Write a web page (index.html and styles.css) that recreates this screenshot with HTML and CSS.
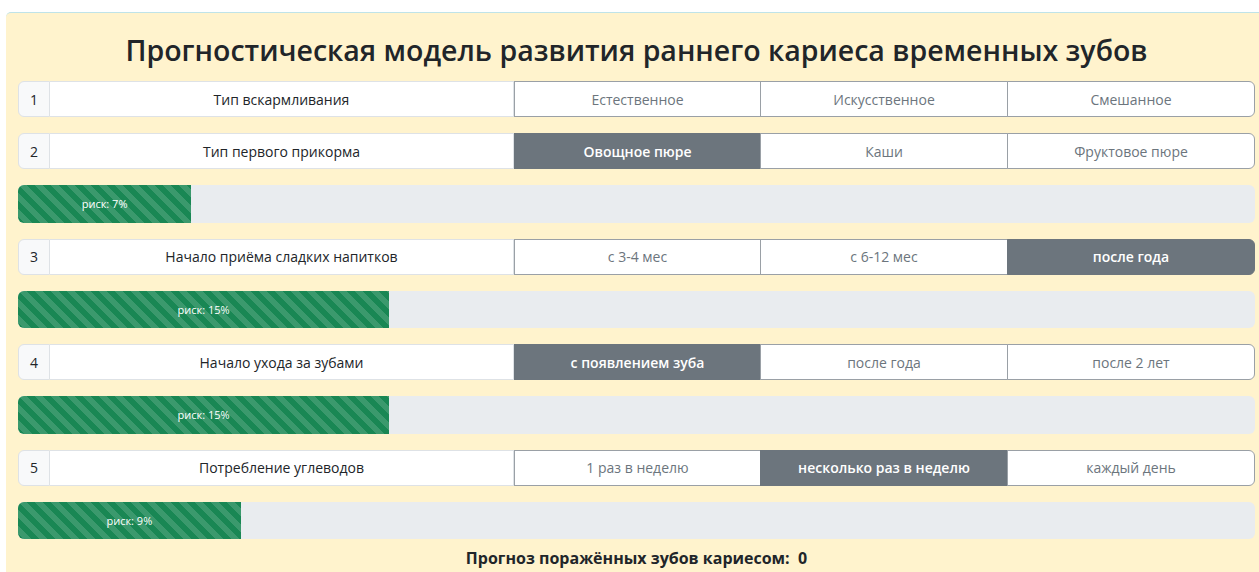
FILE: index.html
```html
<!DOCTYPE html>
<html lang="ru">
<head>
<meta charset="utf-8">
<title>Прогностическая модель</title>
<link rel="stylesheet" href="styles.css">
</head>
<body>
<div class="panel">
  <h1 class="title">Прогностическая модель развития раннего кариеса временных зубов</h1>

  <div class="row">
    <div class="num">1</div>
    <div class="label">Тип вскармливания</div>
    <div class="opt">Естественное</div>
    <div class="opt">Искусственное</div>
    <div class="opt last">Смешанное</div>
  </div>

  <div class="row">
    <div class="num">2</div>
    <div class="label">Тип первого прикорма</div>
    <div class="opt on">Овощное пюре</div>
    <div class="opt">Каши</div>
    <div class="opt last">Фруктовое пюре</div>
  </div>
  <div class="progress"><div class="bar" style="width:14%">риск: 7%</div></div>

  <div class="row">
    <div class="num">3</div>
    <div class="label">Начало приёма сладких напитков</div>
    <div class="opt">с 3-4 мес</div>
    <div class="opt">с 6-12 мес</div>
    <div class="opt last on">после года</div>
  </div>
  <div class="progress"><div class="bar" style="width:30%">риск: 15%</div></div>

  <div class="row">
    <div class="num">4</div>
    <div class="label">Начало ухода за зубами</div>
    <div class="opt on">с появлением зуба</div>
    <div class="opt">после года</div>
    <div class="opt last">после 2 лет</div>
  </div>
  <div class="progress"><div class="bar" style="width:30%">риск: 15%</div></div>

  <div class="row">
    <div class="num">5</div>
    <div class="label">Потребление углеводов</div>
    <div class="opt">1 раз в неделю</div>
    <div class="opt on">несколько раз в неделю</div>
    <div class="opt last">каждый день</div>
  </div>
  <div class="progress"><div class="bar" style="width:18%">риск: 9%</div></div>

  <div class="total">Прогноз поражённых зубов кариесом:&nbsp; 0</div>
</div>
</body>
</html>
```

FILE: styles.css
```css
html, body {
  margin: 0;
  padding: 0;
  overflow: hidden;
  background: #fff;
}

body {
  font-family: "Open Sans", "Noto Sans", sans-serif;
  color: #212529;
}

.panel {
  margin: 12px 0 0 6px;
  width: 1261px;
  height: 560px;
  box-sizing: border-box;
  padding: 0 12px;
  background: #fff3cd;
  border-top: 1px solid #bfe3e8;
  border-radius: 5px 5px 0 0;
}

.title {
  margin: 0;
  padding: 16px 0 10px;
  font-size: 28.5px;
  line-height: 42px;
  font-weight: 600;
  text-align: center;
  color: #212529;
}

.row {
  display: grid;
  grid-template-columns: 32px 1fr repeat(3, 247px);
  height: 36px;
  margin-bottom: 16px;
  font-size: 14px;
}

.row > div {
  display: flex;
  align-items: center;
  justify-content: center;
  box-sizing: border-box;
  background: #fff;
}

.num {
  background: #f8f9fa !important;
  border: 1px solid #dee2e6;
  border-radius: 6px 0 0 6px;
}

.label {
  border: 1px solid #dee2e6;
  border-left: none;
}

.opt {
  color: #6c757d;
  border: 1px solid #9aa0a6;
  margin-left: -1px;
}

.opt:nth-child(3) {
  margin-left: 0;
}

.opt.last {
  border-radius: 0 6px 6px 0;
}

.opt.on {
  background: #6c757d !important;
  border-color: #6c757d;
  color: #fff;
  font-weight: 600;
}

.progress {
  height: 37.5px;
  margin-bottom: 16px;
  background: #e9ecef;
  border-radius: 6px;
  overflow: hidden;
  display: flex;
}

.bar {
  display: flex;
  align-items: center;
  justify-content: center;
  background-color: #198754;
  background-image: linear-gradient(45deg,
    rgba(255, 255, 255, .15) 25%, transparent 25%,
    transparent 50%, rgba(255, 255, 255, .15) 50%,
    rgba(255, 255, 255, .15) 75%, transparent 75%, transparent);
  background-size: 16px 16px;
  color: #fff;
  font-size: 11px;
  white-space: nowrap;
}

.total {
  margin-top: -7px;
  text-align: center;
  font-size: 16px;
  line-height: 20px;
  font-weight: 700;
}
```
